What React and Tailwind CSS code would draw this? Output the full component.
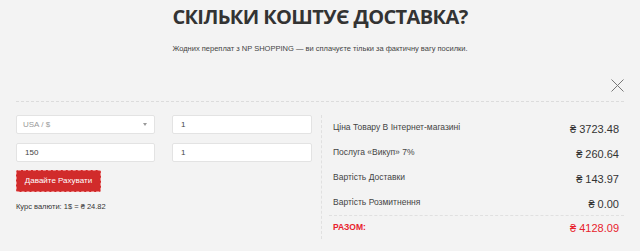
import React from "react";

const rows = [
  ["Ціна Товару В Інтернет-магазині", "₴ 3723.48"],
  ["Послуга «Викуп» 7%", "₴ 260.64"],
  ["Вартість Доставки", "₴ 143.97"],
  ["Вартість Розмитнення", "₴ 0.00"],
];

export default function App() {
  return (
    <div className="w-[640px] h-[251px] bg-[#f3f3f3] overflow-hidden" style={{ fontFamily: '"Liberation Sans", Arial, sans-serif' }}>
      <div className="pt-[4px] text-center">
        <h1 className="text-[20px] leading-[26px] font-bold text-[#333] tracking-[-0.6px]" style={{ fontFamily: '"Open Sans", sans-serif' }}>
          СКІЛЬКИ КОШТУЄ ДОСТАВКА?
        </h1>
        <p className="mt-[14px] text-[7.5px] leading-[10px] text-[#444]">
          Жодних переплат з NP SHOPPING — ви сплачуєте тільки за фактичну вагу посилки.
        </p>
      </div>
      <div className="flex justify-end pr-[16px] mt-[25px]">
        <svg width="13" height="13" viewBox="0 0 13 13" className="block">
          <path d="M0.5 0.5 L12.5 12.5 M12.5 0.5 L0.5 12.5" stroke="#777" strokeWidth="1" />
        </svg>
      </div>
      <div className="mx-[16px] mt-[9px] border-t border-dashed border-[#dcdcdc]"></div>
      <div className="flex mx-[16px]">
        <div className="w-[296px] pt-[13px]">
          <div className="flex gap-[17px]">
            <div className="w-[139px] h-[19px] bg-white border border-[#e3e3e3] rounded-[2px] flex items-center justify-between pl-[6px] pr-[7px]">
              <span className="text-[8px] text-[#9a9a9a]">USA / $</span>
              <span className="w-0 h-0 border-l-[2px] border-r-[2px] border-t-[3px] border-l-transparent border-r-transparent border-t-[#999]"></span>
            </div>
            <div className="w-[140px] h-[19px] bg-white border border-[#e3e3e3] rounded-[2px] flex items-center pl-[8px]">
              <span className="text-[8px] text-[#444]">1</span>
            </div>
          </div>
          <div className="flex gap-[17px] mt-[9px]">
            <div className="w-[139px] h-[19px] bg-white border border-[#e3e3e3] rounded-[2px] flex items-center pl-[8px]">
              <span className="text-[8px] text-[#444]">150</span>
            </div>
            <div className="w-[140px] h-[19px] bg-white border border-[#e3e3e3] rounded-[2px] flex items-center pl-[8px]">
              <span className="text-[8px] text-[#444]">1</span>
            </div>
          </div>
          <div className="mt-[8px] w-[85px] h-[22px] bg-[#d12b2b] rounded-[2px] border border-dashed border-[#e88] flex items-center justify-center">
            <span className="text-[8px] text-white">Давайте Рахувати</span>
          </div>
          <div className="mt-[10px] text-[7.5px] leading-[10px] text-[#333]">Курс валюти: 1$ = ₴ 24.82</div>
        </div>
        <div className="flex-1 ml-[9px] mt-[13px] h-[124px] border-l border-dashed border-[#e0e0e0] pl-[7px]">
          <div className="pl-[4px] pr-[5px]">
            {rows.map(([l, v], i) => (
              <div key={i} className="flex justify-between items-center h-[25px]">
                <span className="text-[8.5px] text-[#444]">{l}</span>
                <span className="text-[11px] text-[#333] pt-[3px]">{v}</span>
              </div>
            ))}
          </div>
          <div className="border-t border-dashed border-[#e0e0e0]"></div>
          <div className="flex justify-between items-center h-[22px] pl-[4px] pr-[5px]">
            <span className="text-[8.5px] font-bold text-[#e8222c]">РАЗОМ:</span>
            <span className="text-[11px] text-[#e8222c] pt-[3px]">₴ 4128.09</span>
          </div>
        </div>
      </div>
    </div>
  );
}
